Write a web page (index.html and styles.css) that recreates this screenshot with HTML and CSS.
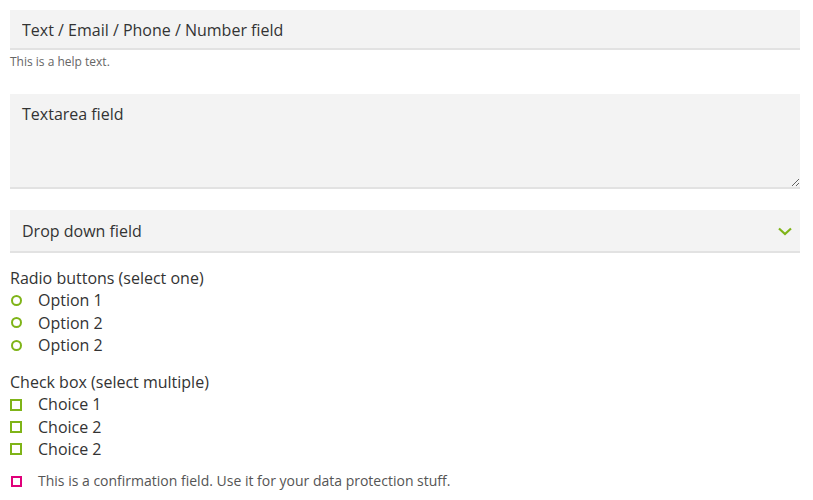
FILE: index.html
```html
<!DOCTYPE html>
<html lang="en">
<head>
<meta charset="utf-8">
<title>Form</title>
<link rel="stylesheet" href="styles.css">
</head>
<body>
<form class="form">
  <div class="group">
    <input class="field" type="text" placeholder="Text / Email / Phone / Number field">
    <div class="help">This is a help text.</div>
  </div>
  <textarea class="field area" placeholder="Textarea field"></textarea>
  <div class="select-wrap">
    <select class="field select">
      <option>Drop down field</option>
    </select>
    <svg class="chev" width="14" height="9" viewBox="0 0 14 9"><polyline points="1,1.5 7,7 13,1.5" fill="none" stroke="#7fb418" stroke-width="2.2"/></svg>
  </div>
  <fieldset class="choices">
    <div class="legend">Radio buttons (select one)</div>
    <label class="opt"><span class="radio"></span>Option 1</label>
    <label class="opt"><span class="radio"></span>Option 2</label>
    <label class="opt"><span class="radio"></span>Option 2</label>
  </fieldset>
  <fieldset class="choices checks">
    <div class="legend">Check box (select multiple)</div>
    <label class="opt"><span class="box"></span>Choice 1</label>
    <label class="opt"><span class="box"></span>Choice 2</label>
    <label class="opt"><span class="box"></span>Choice 2</label>
  </fieldset>
  <label class="confirm"><span class="box pink"></span>This is a confirmation field. Use it for your data protection stuff.</label>
</form>
</body>
</html>
```
FILE: styles.css
```css
html, body { margin: 0; padding: 0; background: #fff; }
body {
  padding: 10px 13px 0 10px;
  font-family: "Open Sans", "DejaVu Sans", sans-serif;
  color: #333;
}
.form { display: flex; flex-direction: column; }
.field {
  display: block;
  box-sizing: border-box;
  width: 100%;
  margin: 0;
  border: 0;
  border-bottom: 2px solid #e2e2e2;
  border-radius: 0;
  background: #f3f3f3;
  font-family: inherit;
  font-size: 16px;
  color: #333;
  padding: 0 12px;
  outline: none;
}
.field::placeholder { color: #333; opacity: 1; }
input.field { height: 40px; line-height: 20px; padding-top: 2px; }
.help {
  margin-top: 5px;
  font-size: 12px;
  line-height: 14px;
  color: #666;
}
.area {
  margin-top: 25px;
  height: 95px;
  padding: 10px 12px;
  line-height: 20px;
  resize: vertical;
}
.select-wrap { position: relative; margin-top: 21px; }
.select {
  height: 43px;
  appearance: none;
  -webkit-appearance: none;
  line-height: 20px;
}
.chev { position: absolute; right: 8px; top: 17px; pointer-events: none; }
.choices { border: 0; margin: 14px 0 0; padding: 0; display: flex; flex-direction: column; }
.checks { margin-top: 15px; }
.legend, .opt { font-size: 16px; line-height: 22.3px; }
.opt { display: flex; align-items: center; }
.radio {
  box-sizing: border-box;
  width: 11px; height: 11px;
  border: 2px solid #7fb418;
  border-radius: 50%;
  margin: 0 16px 0 1px;
  flex: none;
}
.box {
  box-sizing: border-box;
  width: 12px; height: 12px;
  border: 2.5px solid #7fb418;
  margin: 0 16px 0 0;
  flex: none;
}
.confirm {
  display: flex;
  align-items: center;
  margin-top: 12px;
  font-size: 14px;
  line-height: 18px;
  color: #555;
}
.box.pink { border-color: #e0007a; width: 11px; height: 11px; border-width: 2px; margin: 0 16px 0 1px; }
```
